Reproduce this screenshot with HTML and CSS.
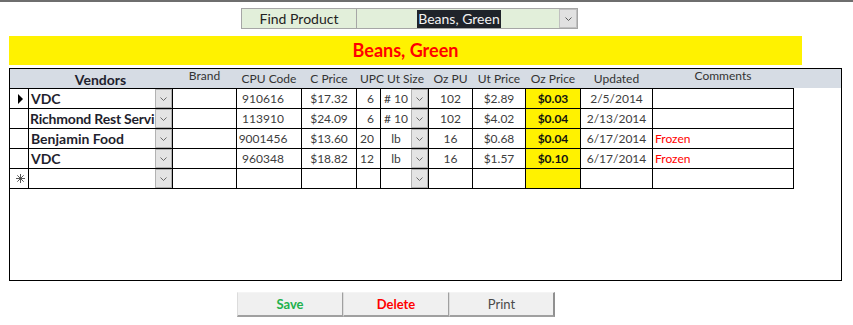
FILE: index.html
```html
<!DOCTYPE html>
<html>
<head>
<meta charset="utf-8">
<link rel="stylesheet" href="styles.css">
</head>
<body>
<div class="topline"></div>
<div class="find">
  <div class="find-label">Find Product</div>
  <div class="find-combo">
    <div class="find-value"><span class="sel">Beans, Green</span></div>
    <div class="dd dd-find"><svg width="7" height="4" viewBox="0 0 7 4"><path d="M0.5 0.5 L3.5 3.5 L6.5 0.5" stroke="#5a5a5a" fill="none"/></svg></div>
  </div>
</div>
<div class="title">Beans, Green</div>
<div class="sub">
  <div class="head">
    <div class="grid hgrid">
      <div></div>
      <div class="h hb">Vendors</div>
      <div class="h hup">Brand</div>
      <div class="h">CPU Code</div>
      <div class="h">C Price</div>
      <div class="h hupc">UPC</div>
      <div class="h hut">Ut Size</div>
      <div class="h">Oz PU</div>
      <div class="h">Ut Price</div>
      <div class="h">Oz Price</div>
      <div class="h">Updated</div>
      <div class="h hup">Comments</div>
    </div>
  </div>
  <div class="grid rows">
    <div class="c sel-cell"><span class="tri"></span></div>
    <div class="c vend"><span class="vt">VDC</span><span class="dd"><svg width="7" height="4" viewBox="0 0 7 4"><path d="M0.5 0.5 L3.5 3.5 L6.5 0.5" stroke="#6a6a6a" fill="none"/></svg></span></div>
    <div class="c"></div>
    <div class="c cpu">910616</div>
    <div class="c ctr">$17.32</div>
    <div class="c upc">6</div>
    <div class="c vend"><span class="ut">#&nbsp;10</span><span class="dd"><svg width="7" height="4" viewBox="0 0 7 4"><path d="M0.5 0.5 L3.5 3.5 L6.5 0.5" stroke="#6a6a6a" fill="none"/></svg></span></div>
    <div class="c ctr">102</div>
    <div class="c ctr">$2.89</div>
    <div class="c oz">$0.03</div>
    <div class="c ctr">2/5/2014</div>
    <div class="c com"></div>

    <div class="c sel-cell"></div>
    <div class="c vend"><span class="vt tight">Richmond Rest Servi</span><span class="dd"><svg width="7" height="4" viewBox="0 0 7 4"><path d="M0.5 0.5 L3.5 3.5 L6.5 0.5" stroke="#6a6a6a" fill="none"/></svg></span></div>
    <div class="c"></div>
    <div class="c cpu">113910</div>
    <div class="c ctr">$24.09</div>
    <div class="c upc">6</div>
    <div class="c vend"><span class="ut">#&nbsp;10</span><span class="dd"><svg width="7" height="4" viewBox="0 0 7 4"><path d="M0.5 0.5 L3.5 3.5 L6.5 0.5" stroke="#6a6a6a" fill="none"/></svg></span></div>
    <div class="c ctr">102</div>
    <div class="c ctr">$4.02</div>
    <div class="c oz">$0.04</div>
    <div class="c ctr">2/13/2014</div>
    <div class="c com"></div>

    <div class="c sel-cell"></div>
    <div class="c vend"><span class="vt">Benjamin Food</span><span class="dd"><svg width="7" height="4" viewBox="0 0 7 4"><path d="M0.5 0.5 L3.5 3.5 L6.5 0.5" stroke="#6a6a6a" fill="none"/></svg></span></div>
    <div class="c"></div>
    <div class="c cpu">9001456</div>
    <div class="c ctr">$13.60</div>
    <div class="c upc">20</div>
    <div class="c vend"><span class="ut">lb</span><span class="dd"><svg width="7" height="4" viewBox="0 0 7 4"><path d="M0.5 0.5 L3.5 3.5 L6.5 0.5" stroke="#6a6a6a" fill="none"/></svg></span></div>
    <div class="c ctr">16</div>
    <div class="c ctr">$0.68</div>
    <div class="c oz">$0.04</div>
    <div class="c ctr">6/17/2014</div>
    <div class="c com">Frozen</div>

    <div class="c sel-cell"></div>
    <div class="c vend"><span class="vt">VDC</span><span class="dd"><svg width="7" height="4" viewBox="0 0 7 4"><path d="M0.5 0.5 L3.5 3.5 L6.5 0.5" stroke="#6a6a6a" fill="none"/></svg></span></div>
    <div class="c"></div>
    <div class="c cpu">960348</div>
    <div class="c ctr">$18.82</div>
    <div class="c upc">12</div>
    <div class="c vend"><span class="ut">lb</span><span class="dd"><svg width="7" height="4" viewBox="0 0 7 4"><path d="M0.5 0.5 L3.5 3.5 L6.5 0.5" stroke="#6a6a6a" fill="none"/></svg></span></div>
    <div class="c ctr">16</div>
    <div class="c ctr">$1.57</div>
    <div class="c oz">$0.10</div>
    <div class="c ctr">6/17/2014</div>
    <div class="c com">Frozen</div>

    <div class="c sel-cell"><svg class="ast" width="9" height="9" viewBox="0 0 9 9"><path d="M4.5 0 V9 M0 4.5 H9 M1.3 1.3 L7.7 7.7 M7.7 1.3 L1.3 7.7" stroke="#444" stroke-width="0.9" fill="none"/></svg></div>
    <div class="c vend"><span class="vt"></span><span class="dd"><svg width="7" height="4" viewBox="0 0 7 4"><path d="M0.5 0.5 L3.5 3.5 L6.5 0.5" stroke="#6a6a6a" fill="none"/></svg></span></div>
    <div class="c"></div>
    <div class="c cpu"></div>
    <div class="c ctr"></div>
    <div class="c upc"></div>
    <div class="c vend"><span class="ut"></span><span class="dd"><svg width="7" height="4" viewBox="0 0 7 4"><path d="M0.5 0.5 L3.5 3.5 L6.5 0.5" stroke="#6a6a6a" fill="none"/></svg></span></div>
    <div class="c ctr"></div>
    <div class="c ctr"></div>
    <div class="c oz"></div>
    <div class="c ctr"></div>
    <div class="c com"></div>
  </div>
</div>
<div class="buttons">
  <div class="btn save">Save</div>
  <div class="btn del">Delete</div>
  <div class="btn print">Print</div>
</div>
</body>
</html>
```

FILE: styles.css
```css
html, body {
  margin: 0;
  padding: 0;
  background: #fff;
  font-family: Lato, "Liberation Sans", sans-serif;
}
.topline {
  height: 2px;
  background: #6e6e6e;
}
.find {
  display: flex;
  margin: 6px 0 0 241px;
  height: 21px;
}
.find-label {
  box-sizing: border-box;
  width: 116px;
  height: 21px;
  border: 1px solid #a6a6a6;
  background: #e2efda;
  font-size: 14px;
  color: #222;
  text-align: center;
  line-height: 19px;
}
.find-combo {
  box-sizing: border-box;
  width: 221px;
  height: 21px;
  border: 1px solid #a6a6a6;
  border-left: none;
  background: #e2efda;
  display: flex;
}
.find-value {
  flex: 1;
  display: flex;
  justify-content: center;
  align-items: center;
  padding-left: 2px;
}
.sel {
  background: #1f232a;
  color: #f2f2f2;
  font-size: 14px;
  line-height: 18px;
  padding: 0 1px;
}
.dd {
  box-sizing: border-box;
  width: 17px;
  flex: none;
  background: #e4e4e4;
  border: 1px solid #b2b2b2;
  display: flex;
  align-items: center;
  justify-content: center;
}
.dd-find {
  width: 18px;
  background: #e1e1e1;
  border-color: #c0c0c0;
}
.title {
  margin: 7px 0 0 9px;
  width: 793px;
  height: 29px;
  background: #fff200;
  color: #ff0000;
  font-weight: bold;
  font-size: 18px;
  line-height: 28px;
  text-align: center;
}
.sub {
  box-sizing: border-box;
  margin: 3px 0 0 9px;
  width: 833px;
  height: 213px;
  border: 1px solid #000;
}
.head {
  height: 19px;
  background: #d6dce4;
}
.grid {
  display: grid;
  grid-template-columns: 18px 143px 63px 64px 54px 23px 47px 43px 52px 54px 71px 140px;
  column-gap: 1px;
  width: max-content;
}
.hgrid {
  height: 19px;
}
.h {
  font-size: 12px;
  color: #333;
  text-align: center;
  line-height: 19px;
  white-space: nowrap;
}
.hb {
  font-weight: bold;
  font-size: 14px;
  color: #1f1f2e;
  line-height: 21px;
}
.hup {
  line-height: 14px;
}
.hupc {
  padding-left: 3px;
}
.hut {
  padding-left: 2px;
}
.rows {
  background: #000;
  row-gap: 1px;
  grid-auto-rows: 19px;
  border-top: 1px solid #000;
  border-right: 1px solid #000;
  border-bottom: 1px solid #000;
}
.c {
  background: #fff;
  font-size: 12px;
  color: #404040;
  line-height: 19px;
  white-space: nowrap;
  overflow: hidden;
}
.sel-cell {
  display: flex;
  align-items: center;
  justify-content: center;
}
.tri {
  width: 0;
  height: 0;
  border-left: 5px solid #000;
  border-top: 5px solid transparent;
  border-bottom: 5px solid transparent;
  margin-left: 2px;
}
.ast {
  margin-left: 3px;
}
.vend {
  display: flex;
}
.vt {
  flex: 1;
  overflow: hidden;
  padding-left: 2px;
  font-weight: bold;
  font-size: 14px;
  color: #1f1f2e;
}
.tight {
  letter-spacing: -0.2px;
  padding-left: 1px;
}
.ut {
  flex: 1;
  text-align: center;
  overflow: hidden;
}
.cpu {
  text-align: center;
  padding-right: 12px;
}
.ctr {
  text-align: center;
}
.upc {
  text-align: right;
  padding-right: 6px;
}
.oz {
  background: #fff200;
  text-align: center;
  font-weight: bold;
  color: #111;
}
.com {
  color: #ff0000;
  padding-left: 2px;
}
.buttons {
  display: flex;
  margin: 11px 0 0 237px;
}
.btn {
  box-sizing: border-box;
  width: 106px;
  height: 25px;
  background: #f0f0f0;
  border-top: 1px solid #f4f4f4;
  border-left: 1px solid #dcdcdc;
  border-right: 1px solid #a0a0a0;
  border-bottom: 2px solid #a0a0a0;
  text-align: center;
  font-size: 13px;
  line-height: 23px;
}
.save {
  color: #22b14c;
  font-weight: bold;
}
.del {
  color: #ff0000;
  font-weight: bold;
}
.print {
  color: #4a4a4a;
  border-right: 2px solid #909090;
}
```
